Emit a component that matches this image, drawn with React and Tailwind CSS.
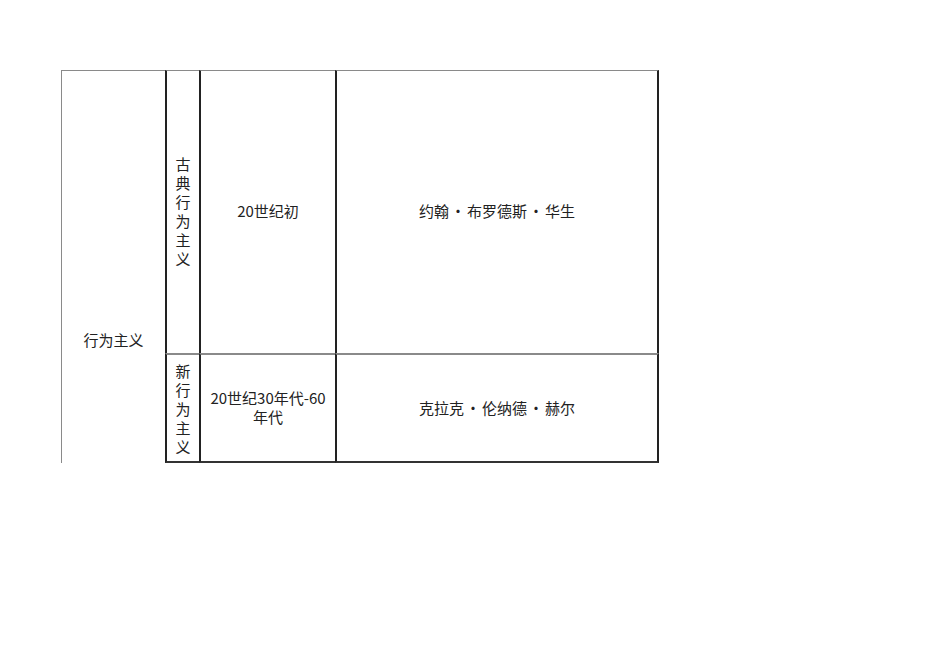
export default function App() {
  const font = { fontFamily: '"Noto Sans CJK SC", "Noto Sans", sans-serif' };
  const Dot = () => <span className="mx-[1.5px]">·</span>;
  return (
    <div className="w-[950px] h-[672px] bg-white text-[#222] text-[15px] leading-[19px]" style={font}>
      <div className="pt-[70px] pl-[61px]">
        <div className="grid grid-cols-[104px_34px_136px_324px] grid-rows-[283px_110px]">
          <div className="row-span-2 border-l border-t border-[#8a8a8a] flex justify-center pt-[259px]">
            行为主义
          </div>
          <div className="border-t border-t-[#8a8a8a] border-l-2 border-l-[#222] flex flex-col items-center justify-center pb-[2px]">
            {"古典行为主义".split("").map((c, i) => (
              <span key={i}>{c}</span>
            ))}
          </div>
          <div className="border-t border-t-[#8a8a8a] border-l-2 border-l-[#222] flex items-center justify-center pb-[3px]">
            20世纪初
          </div>
          <div className="border-t border-t-[#8a8a8a] border-l-2 border-l-[#222] border-r-2 border-r-[#222] flex items-center justify-center pb-[3px]">
            <span>约翰<Dot />布罗德斯<Dot />华生</span>
          </div>
          <div className="border-t-2 border-t-[#8a8a8a] border-b-2 border-b-[#333] border-l-2 border-l-[#222] flex flex-col items-center justify-center">
            {"新行为主义".split("").map((c, i) => (
              <span key={i}>{c}</span>
            ))}
          </div>
          <div className="border-t-2 border-t-[#8a8a8a] border-b-2 border-b-[#333] border-l-2 border-l-[#222] flex flex-col items-center justify-center text-center pb-[2px]">
            <span>20世纪30年代-60</span>
            <span>年代</span>
          </div>
          <div className="border-t-2 border-t-[#8a8a8a] border-b-2 border-b-[#333] border-l-2 border-l-[#222] border-r-2 border-r-[#222] flex items-center justify-center pb-[2px]">
            <span>克拉克<Dot />伦纳德<Dot />赫尔</span>
          </div>
        </div>
      </div>
    </div>
  );
}
